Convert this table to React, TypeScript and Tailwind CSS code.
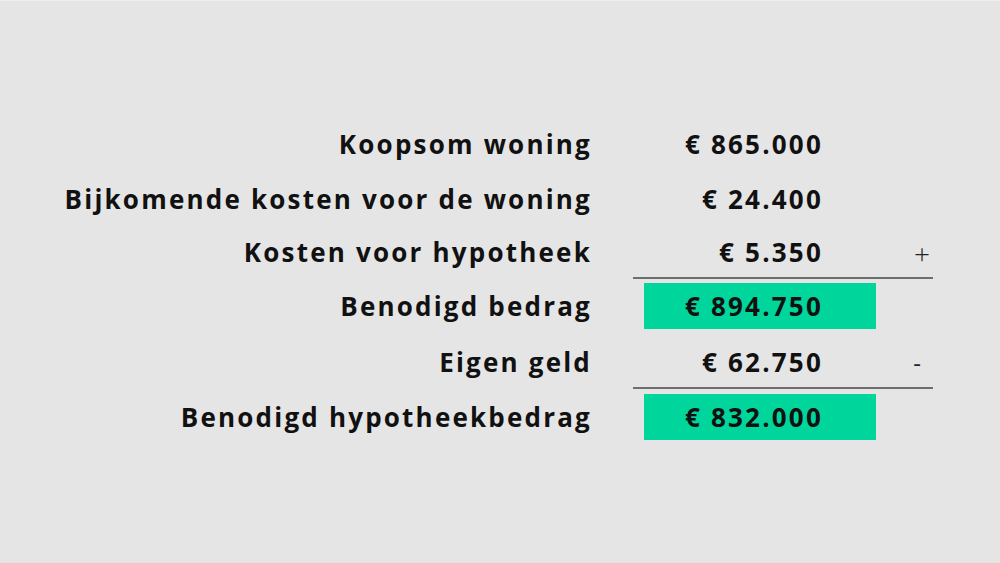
export default function App() {
  const font = { fontFamily: '"Open Sans", "DejaVu Sans", sans-serif' };

  return (
    <div
      className="w-[1000px] h-[563px] bg-[#e5e5e5] border-t border-[#eeeeee] text-[#111111] font-bold text-[26px] leading-none tracking-[2.2px]"
      style={font}
    >
      <div className="pt-[115px] flex flex-col">
        {/* Koopsom */}
        <div className="flex h-[55px] items-center">
          <div className="w-[592px] text-right">Koopsom woning</div>
          <div className="ml-[41px] w-[190px] text-right">€ 865.000</div>
        </div>

        {/* Bijkomende kosten */}
        <div className="flex h-[55px] items-center">
          <div className="w-[592px] text-right">Bijkomende kosten voor de woning</div>
          <div className="ml-[41px] w-[190px] text-right">€ 24.400</div>
        </div>

        {/* Kosten hypotheek */}
        <div className="flex h-[51px] items-center">
          <div className="w-[592px] text-right">Kosten voor hypotheek</div>
          <div className="ml-[41px] w-[190px] text-right">€ 5.350</div>
          <div className="w-[110px] text-right pr-[3px] pt-[3px] font-light tracking-normal text-[28px] text-[#222222]">+</div>
        </div>

        <div className="flex">
          <div className="ml-[633px] w-[300px] h-[2px] bg-[#6e6e6e]"></div>
        </div>

        {/* Benodigd bedrag */}
        <div className="flex h-[58px] items-start pt-[4px]">
          <div className="w-[592px] h-[46px] flex items-center justify-end">Benodigd bedrag</div>
          <div className="ml-[52px] w-[232px] h-[46px] bg-[#00d69b] flex items-center justify-end pr-[53px]">
            € 894.750
          </div>
        </div>

        {/* Eigen geld */}
        <div className="flex h-[50px] items-center">
          <div className="w-[592px] text-right">Eigen geld</div>
          <div className="ml-[41px] w-[190px] text-right">€ 62.750</div>
          <div className="w-[110px] text-right pr-[12px] pt-[2px] font-normal tracking-normal text-[24px] text-[#222222]">-</div>
        </div>

        <div className="flex">
          <div className="ml-[633px] w-[300px] h-[2px] bg-[#6e6e6e]"></div>
        </div>

        {/* Benodigd hypotheekbedrag */}
        <div className="flex items-start pt-[5px]">
          <div className="w-[592px] h-[46px] flex items-center justify-end">Benodigd hypotheekbedrag</div>
          <div className="ml-[52px] w-[232px] h-[46px] bg-[#00d69b] flex items-center justify-end pr-[53px]">
            € 832.000
          </div>
        </div>
      </div>
    </div>
  );
}
